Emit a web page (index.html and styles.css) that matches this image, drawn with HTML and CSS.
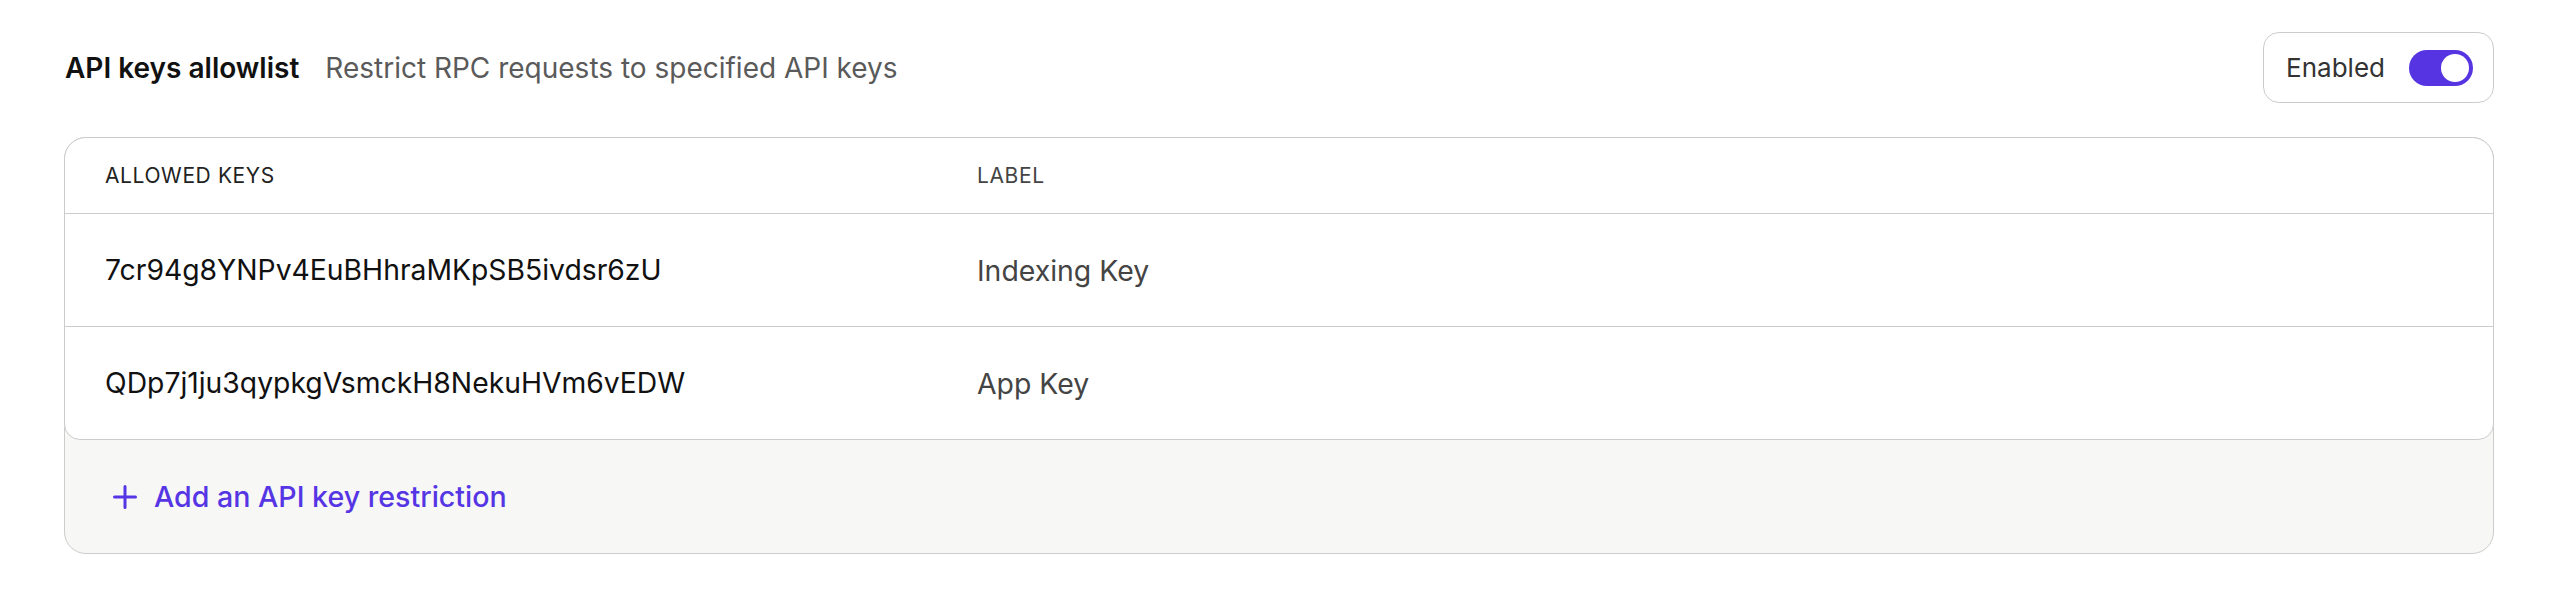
FILE: index.html
```html
<!DOCTYPE html>
<html lang="en">
<head>
<meta charset="utf-8">
<title>API keys allowlist</title>
<link rel="stylesheet" href="styles.css">
</head>
<body>
<div class="page">
  <div class="top">
    <div class="heading">
      <span class="title">API keys allowlist</span>
      <span class="desc">Restrict RPC requests to specified API keys</span>
    </div>
    <div class="toggle-box">
      <span class="toggle-label">Enabled</span>
      <span class="switch"><span class="knob"></span></span>
    </div>
  </div>
  <div class="card">
    <div class="table">
      <div class="row head">
        <div class="cell">ALLOWED KEYS</div>
        <div class="cell">LABEL</div>
      </div>
      <div class="row">
        <div class="cell key">7cr94g8YNPv4EuBHhraMKpSB5ivdsr6zU</div>
        <div class="cell label">Indexing Key</div>
      </div>
      <div class="row last">
        <div class="cell key">QDp7j1ju3qypkgVsmckH8NekuHVm6vEDW</div>
        <div class="cell label">App Key</div>
      </div>
    </div>
    <div class="footer">
      <a class="add" href="#">
        <svg class="plus" width="24" height="24" viewBox="0 0 24 24" aria-hidden="true">
          <path d="M12 1.5v21M1.5 12h21" stroke="currentColor" stroke-width="3" stroke-linecap="round" fill="none"/>
        </svg>
        <span>Add an API key restriction</span>
      </a>
    </div>
  </div>
</div>
</body>
</html>
```

FILE: styles.css
```css
* { box-sizing: border-box; }
html, body { margin: 0; padding: 0; background: #ffffff; }
body {
  font-family: Inter, "Noto Sans", "Liberation Sans", sans-serif;
  color: #111111;
}
.page {
  padding: 32px 64px 0 64px;
}
.top {
  display: flex;
  align-items: center;
  justify-content: space-between;
  height: 71px;
  margin-bottom: 34px;
}
.heading {
  display: flex;
  align-items: baseline;
  gap: 26px;
  padding-left: 1px;
}
.title {
  font-size: 28px;
  font-weight: 600;
  color: #111111;
}
.desc {
  font-size: 28px;
  font-weight: 400;
  color: #5a5a5a;
}
.toggle-box {
  display: flex;
  align-items: center;
  gap: 24px;
  height: 71px;
  padding: 0 20px 0 22px;
  border: 1px solid #cccccc;
  border-radius: 16px;
  background: #ffffff;
}
.toggle-label {
  font-size: 26px;
  color: #333333;
}
.switch {
  display: flex;
  align-items: center;
  justify-content: flex-end;
  width: 64px;
  height: 36px;
  padding: 0 4px;
  border-radius: 18px;
  background: #5634e2;
}
.knob {
  width: 28px;
  height: 28px;
  border-radius: 50%;
  background: #ffffff;
}
.card {
  border: 1px solid #cccccc;
  border-radius: 22px;
  background: #f7f7f6;
}
.table {
  margin: -1px -1px 0 -1px;
  border: 1px solid #cccccc;
  border-radius: 22px 22px 16px 16px;
  background: #ffffff;
}
.row {
  display: grid;
  grid-template-columns: 872px 1fr;
  align-items: center;
  height: 113px;
  padding: 0 40px;
  border-bottom: 1px solid #cccccc;
}
.row.head {
  height: 76px;
}
.row.last {
  border-bottom: none;
  height: 112px;
}
.cell.key {
  font-size: 28.3px;
  color: #111111;
}
.cell.label {
  font-size: 28.4px;
  color: #444444;
}
.head .cell {
  font-size: 21px;
  letter-spacing: 0.6px;
  color: #222222;
}
.head .cell + .cell {
  color: #444444;
}
.footer {
  display: flex;
  align-items: center;
  height: 113px;
  padding: 0 48px;
}
.add {
  display: flex;
  align-items: center;
  gap: 17px;
  color: #5535e4;
  text-decoration: none;
  font-size: 28.6px;
  font-weight: 500;
}
.plus { display: block; }
```
